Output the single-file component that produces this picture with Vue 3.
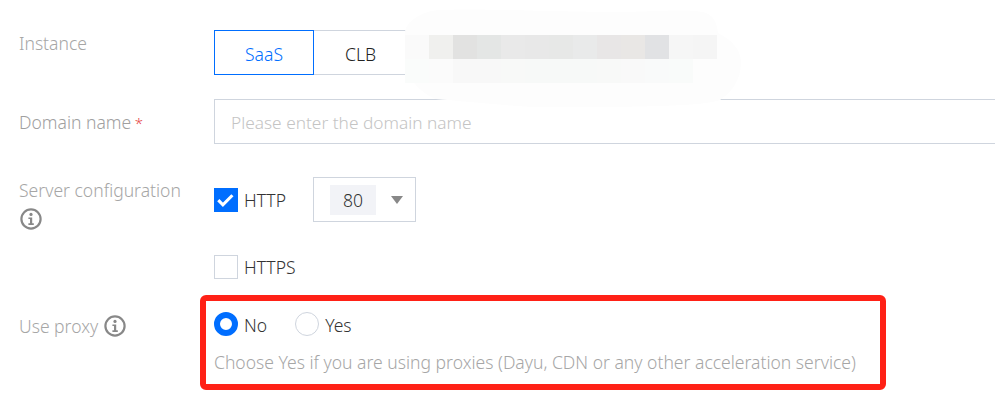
<script setup>
const topCells = ['#fafafa','#f0f0ee','#e2e2e1','#e4e6e5','#e9e9e9','#e8e8e8','#e7e8e7','#e9eaea','#e8e6e6','#e9e7e5','#e1e2e4','#f6f6f6','#f5f5f5']
const bottomCells = ['#fafcfb','#fbfbfb','#f8f8f8','#f8f8f8','#f8f9f8','#f7f9f8','#f7f9f8','#f7f9f8','#f8f9f8','#f9f9f9','#f9fafa','#f9fbfa']
</script>

<template>
  <main class="page">
    <section class="row row-instance">
      <div class="label">Instance</div>
      <div class="tabs">
        <button class="tab active">SaaS</button>
        <button class="tab plain">CLB</button>
      </div>
    </section>

    <section class="row row-domain">
      <div class="label">Domain name <span class="req">*</span></div>
      <div class="input">Please enter the domain name</div>
    </section>

    <section class="row row-server">
      <div class="label server-label">
        <div>Server configuration</div>
        <svg class="info" viewBox="0 0 22 22"><circle cx="11" cy="11" r="9.6" /><circle class="dot" cx="11" cy="6.4" r="1.6" /><path class="i" d="M8.4 9.4h3.8v5.8h1.6v1.7H8.4v-1.7h1.6v-4.1H8.4z" /></svg>
      </div>
      <div class="server-fields">
        <div class="http-line">
          <span class="box checked">
            <svg viewBox="0 0 24 24"><path d="M3.6 12.2l5 5 10.4-10.4" /></svg>
          </span>
          <span class="opt">HTTP</span>
          <div class="select">
            <span class="tag">80</span>
            <span class="caret"></span>
          </div>
        </div>
        <div class="https-line">
          <span class="box"></span>
          <span class="opt">HTTPS</span>
        </div>
      </div>
    </section>

    <section class="row row-proxy">
      <div class="label proxy-label">
        Use proxy
        <svg class="info" viewBox="0 0 22 22"><circle cx="11" cy="11" r="9.6" /><circle class="dot" cx="11" cy="6.4" r="1.6" /><path class="i" d="M8.4 9.4h3.8v5.8h1.6v1.7H8.4v-1.7h1.6v-4.1H8.4z" /></svg>
      </div>
      <div class="proxy-fields">
        <div class="radios">
          <span class="radio on"></span><span class="opt">No</span>
          <span class="radio second"></span><span class="opt">Yes</span>
        </div>
        <div class="hint">Choose Yes if you are using proxies (Dayu, CDN or any other acceleration service)</div>
      </div>
    </section>

    <svg class="mask" width="345" height="110" viewBox="0 0 345 110">
      <path fill="#fdfdfd" d="M38 10C80 8 160 12 215 12C255 12 290 8 306 13C316 17 317 26 318 33C332 40 341 50 341 62C341 80 332 92 320 100C300 107 230 107 133 107C100 105 60 101 36 99C18 92 5 75 5 60V32C6 22 20 12 38 10Z" />
      <rect v-for="(c, i) in topCells" :key="'t' + i" :x="5 + i * 24" y="35" width="24" height="24" :fill="c" />
      <rect v-for="(c, i) in bottomCells" :key="'b' + i" :x="5 + i * 24" y="59" width="24" height="24" :fill="c" />
    </svg>
    <div class="highlight"></div>
  </main>
</template>

<style>
html, body { margin: 0; background: #fff; }
</style>

<style scoped>
.page {
  position: relative;
  width: 995px;
  height: 404px;
  overflow: hidden;
  background: #fff;
  font-family: "Noto Sans", "Open Sans", sans-serif;
  font-size: 17.55px;
  font-weight: 300;
  color: #333;
}
.row { display: flex; padding-left: 19px; }
.label { width: 195px; flex: none; color: #a6a6a6; line-height: 26px; white-space: nowrap; }
.row-instance { padding-top: 30px; }
.tabs { display: flex; height: 45px; }
.tab {
  box-sizing: border-box;
  height: 45px;
  padding: 2px 0 0;
  background: #fff;
  font: inherit;
  border: 1px solid #cfd5de;
}
.tab.active { width: 100px; border-color: #006eff; color: #006eff; }
.tab.plain { width: 92px; padding-left: 2px; border-left: 0; color: #222; }
.row-domain { padding-top: 24px; }
.row-domain .label { padding-top: 10px; color: #a0a0a0; }
.req { color: #e54545; font-size: 15px; margin-left: -1px; }
.input {
  box-sizing: border-box;
  width: 800px;
  height: 45px;
  padding-left: 16px;
  border: 1px solid #cfd5de;
  font-size: 17.3px;
  line-height: 45px;
  color: #c4c4c4;
  flex: none;
}
.row-server { padding-top: 33px; }
.info { display: block; width: 22px; height: 22px; fill: none; }
.info circle { stroke: #888; stroke-width: 2.2; }
.info .dot { fill: #888; stroke: none; }
.info .i { fill: #888; }
.server-label .info { margin-top: 5px; margin-left: 1px; }
.server-fields { display: flex; flex-direction: column; }
.http-line { display: flex; align-items: center; height: 45px; }
.box {
  box-sizing: border-box;
  display: block;
  width: 24px;
  height: 24px;
  border: 1px solid #cfd5de;
  background: #fff;
  flex: none;
}
.box.checked { background: #006eff; border-color: #006eff; }
.box.checked svg { display: block; width: 22px; height: 22px; fill: none; stroke: #fff; stroke-width: 3.4; }
.opt { margin-left: 6px; color: #333; line-height: 24px; }
.select {
  box-sizing: border-box;
  display: flex;
  align-items: center;
  width: 103px;
  height: 45px;
  margin-left: 27px;
  padding-left: 16px;
  border: 1px solid #cfd5de;
}
.tag {
  width: 46px;
  height: 30px;
  background: #f2f3f7;
  text-align: center;
  line-height: 30px;
}
.caret {
  margin-left: 15px;
  border-top: 8px solid #888;
  border-left: 6px solid transparent;
  border-right: 6px solid transparent;
}
.https-line { display: flex; align-items: center; margin-top: 33px; }
.row-proxy { padding-top: 33px; }
.proxy-label { display: flex; align-items: center; gap: 6px; height: 28px; line-height: 28px; }
.proxy-fields { display: flex; flex-direction: column; }
.radios { display: flex; align-items: center; height: 24px; }
.radios .opt { padding-top: 2px; }
.radio {
  box-sizing: border-box;
  display: block;
  width: 24px;
  height: 24px;
  border: 1px solid #cfd5de;
  border-radius: 50%;
  flex: none;
}
.radio.on { border: 6.5px solid #006eff; }
.radio.second { margin-left: 28px; }
.hint { margin-top: 14px; color: #a6a6a6; line-height: 24px; white-space: nowrap; }
.mask { position: absolute; left: 400px; top: 0; }
.highlight {
  position: absolute;
  left: 200px;
  top: 295px;
  box-sizing: border-box;
  width: 686px;
  height: 95px;
  border: 6px solid #ff2116;
  border-radius: 6px;
}
</style>
